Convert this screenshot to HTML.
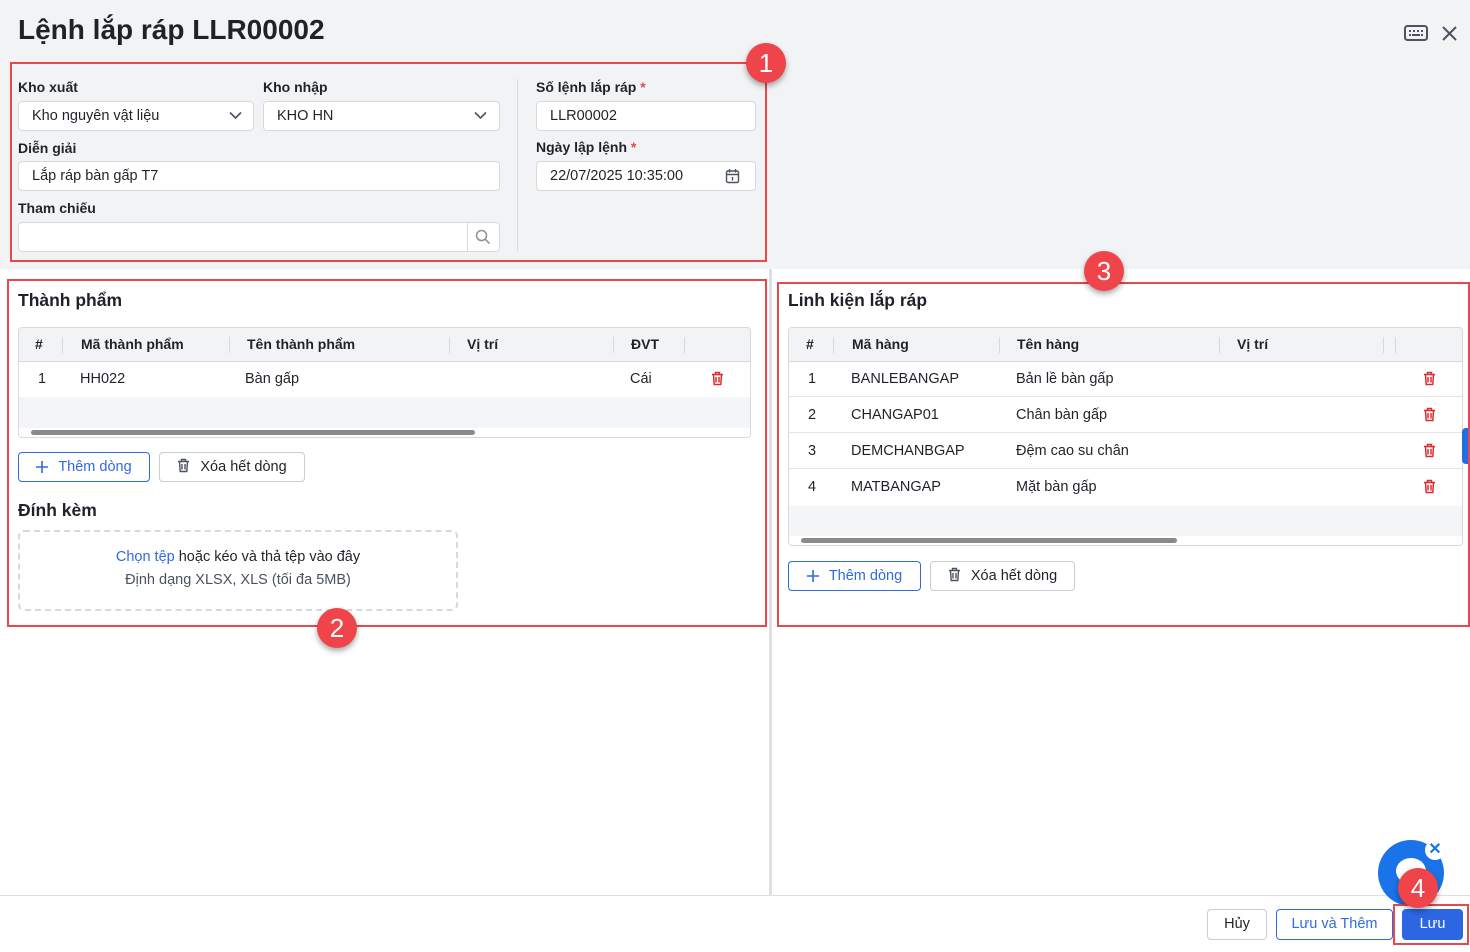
<!DOCTYPE html>
<html><head><meta charset="utf-8"><style>
*{box-sizing:border-box;margin:0;padding:0}
body{width:1470px;height:952px;position:relative;overflow:hidden;background:#fff;font-family:"Liberation Sans","Noto Sans CJK SC",sans-serif;color:#1f2329;font-size:14px}
.a{position:absolute}
.lbl{position:absolute;font-size:14px;font-weight:bold;color:#1f2329}
.req{color:#e8474c}
.inp{position:absolute;height:30px;background:#fff;border:1px solid #d6d9de;border-radius:4px;padding-left:13px;line-height:28px;font-size:14.5px;color:#1f2329}
.red{position:absolute;border:2px solid #e8474c}
.badge{position:absolute;width:40px;height:40px;border-radius:50%;background:#ef4449;color:#fff;font-size:26px;text-align:center;line-height:40px;box-shadow:0 3px 6px rgba(0,0,0,.35)}
.tbl{position:absolute;border:1px solid #d6d9de;border-radius:4px;overflow:hidden;background:#fff}
.th{position:absolute;top:0;height:33px;line-height:33px;font-weight:bold;font-size:14px;background:#f2f3f5}
.row{position:absolute;left:0;right:0;height:36px;border-bottom:1px solid #e3e5e8}
.c{position:absolute;line-height:36px;font-size:14.5px}
.btn{position:absolute;height:30px;border:1px solid #c9cdd4;border-radius:4px;background:#fff;font-size:14.5px;line-height:28px;text-align:center}
.btnb{border-color:#2f6ae1;color:#2f6ae1}
.vd{position:absolute;top:9px;width:1px;height:16px;background:#d6d9de}
.bi{display:inline-block;vertical-align:-2px;margin-right:10px}
</style></head><body>
<div class="a" style="left:0;top:0;width:1470px;height:269px;background:#f2f3f5"></div>
<div class="a" style="left:18px;top:14px;font-size:28px;font-weight:bold;color:#1f2329">Lệnh lắp ráp LLR00002</div>
<svg class="a" style="left:1404px;top:25px" width="24" height="16" viewBox="0 0 24 16"><rect x="1" y="1" width="22" height="14" rx="2.5" fill="none" stroke="#4b5260" stroke-width="2"/><g fill="#4b5260"><rect x="5" y="5" width="2" height="2"/><rect x="9" y="5" width="2" height="2"/><rect x="13" y="5" width="2" height="2"/><rect x="17" y="5" width="2" height="2"/><rect x="5" y="9" width="2" height="2"/><rect x="8" y="9" width="8" height="2"/><rect x="17" y="9" width="2" height="2"/></g></svg>
<svg class="a" style="left:1441px;top:25px" width="17" height="17" viewBox="0 0 17 17"><path d="M2 2L15 15M15 2L2 15" stroke="#4b5260" stroke-width="2"/></svg>

<div class="lbl" style="left:18px;top:79px">Kho xuất</div>
<div class="lbl" style="left:263px;top:79px">Kho nhập</div>
<div class="inp" style="left:18px;top:101px;width:236px">Kho nguyên vật liệu</div>
<svg class="a" style="left:229px;top:111px" width="13" height="9"><path d="M1 1.5L6.5 7L12 1.5" fill="none" stroke="#4b5260" stroke-width="1.6"/></svg>
<div class="inp" style="left:263px;top:101px;width:237px">KHO HN</div>
<svg class="a" style="left:474px;top:111px" width="13" height="9"><path d="M1 1.5L6.5 7L12 1.5" fill="none" stroke="#4b5260" stroke-width="1.6"/></svg>
<div class="lbl" style="left:18px;top:140px">Diễn giải</div>
<div class="inp" style="left:18px;top:161px;width:482px">Lắp ráp bàn gấp T7</div>
<div class="lbl" style="left:18px;top:200px">Tham chiếu</div>
<div class="inp" style="left:18px;top:222px;width:482px"></div>
<div class="a" style="left:467px;top:223px;width:1px;height:28px;background:#d6d9de"></div>
<svg class="a" style="left:475px;top:229px" width="16" height="16"><circle cx="6.5" cy="6.5" r="5" fill="none" stroke="#8a9099" stroke-width="1.5"/><path d="M10.3 10.3L14.5 14.5" stroke="#8a9099" stroke-width="1.5"/></svg>
<div class="a" style="left:517px;top:79px;width:1px;height:172px;background:#d6d9de"></div>
<div class="lbl" style="left:536px;top:79px">Số lệnh lắp ráp <span class="req">*</span></div>
<div class="inp" style="left:536px;top:101px;width:220px">LLR00002</div>
<div class="lbl" style="left:536px;top:139px">Ngày lập lệnh <span class="req">*</span></div>
<div class="inp" style="left:536px;top:161px;width:220px">22/07/2025 10:35:00</div>
<svg class="a" style="left:725px;top:168px" width="15" height="16"><rect x="1.5" y="3" width="12" height="11.5" rx="1.5" fill="none" stroke="#4b5260" stroke-width="1.4"/><path d="M1.5 6.5H13.5M4.5 1V4.5M10.5 1V4.5M7.5 9V12.5" stroke="#4b5260" stroke-width="1.4"/></svg>

<div class="a" style="left:769px;top:269px;width:3px;height:627px;background:#dcdfe4"></div>

<div class="a" style="left:18px;top:290px;font-size:17.5px;font-weight:bold">Thành phẩm</div>
<div class="tbl" style="left:18px;top:327px;width:733px;height:111px">
 <div class="th" style="left:0;width:733px"></div>
 <div class="th" style="left:16px">#</div><div class="vd" style="left:43px"></div>
 <div class="th" style="left:62px">Mã thành phẩm</div><div class="vd" style="left:210px"></div>
 <div class="th" style="left:228px">Tên thành phẩm</div><div class="vd" style="left:430px"></div>
 <div class="th" style="left:448px">Vị trí</div><div class="vd" style="left:594px"></div>
 <div class="th" style="left:612px">ĐVT</div><div class="vd" style="left:665px"></div>
 <div class="a" style="left:0;top:33px;width:733px;height:1px;background:#d6d9de"></div>
 <div class="row" style="top:33px;border:none"><div class="c" style="left:19px">1</div><div class="c" style="left:61px">HH022</div><div class="c" style="left:226px">Bàn gấp</div><div class="c" style="left:611px">Cái</div>
 <svg class="a" style="left:692px;top:10px" width="13" height="15"><path d="M1 3.5H12M4.5 3.5V1.5H8.5V3.5M2.5 3.5L3.2 13.5H9.8L10.5 3.5M5 6V11.5M8 6V11.5" fill="none" stroke="#e0292f" stroke-width="1.5"/></svg></div>
 <div class="a" style="left:0;top:69px;width:733px;height:31px;background:#f4f5f6"></div>
 <div class="a" style="left:12px;top:102px;width:444px;height:5px;border-radius:3px;background:#8a8a8a"></div>
</div>
<div class="btn btnb" style="left:18px;top:452px;width:132px"><svg class="bi" width="12" height="12"><path d="M6 0V12M0 6H12" stroke="#2f6ae1" stroke-width="1.6"/></svg>Thêm dòng</div>
<div class="btn" style="left:159px;top:452px;width:146px"><svg class="bi" width="13" height="15"><path d="M1 3.5H12M4.5 3.5V1.5H8.5V3.5M2.5 3.5L3.2 13.5H9.8L10.5 3.5M5 6V11.5M8 6V11.5" fill="none" stroke="#4b5260" stroke-width="1.4"/></svg>Xóa hết dòng</div>
<div class="a" style="left:18px;top:500px;font-size:17.5px;font-weight:bold">Đính kèm</div>
<div class="a" style="left:18px;top:530px;width:440px;height:81px;border:2px dashed #d6d9de;border-radius:6px;text-align:center">
 <div style="margin-top:17px;font-size:14.5px"><span style="color:#2f6ae1">Chọn tệp</span> hoặc kéo và thả tệp vào đây</div>
 <div style="margin-top:7px;font-size:14.5px;color:#4b5260">Định dạng XLSX, XLS (tối đa 5MB)</div>
</div>

<div class="a" style="left:788px;top:290px;font-size:17.5px;font-weight:bold">Linh kiện lắp ráp</div>
<div class="tbl" style="left:788px;top:327px;width:675px;height:219px">
 <div class="th" style="left:0;width:675px"></div>
 <div class="th" style="left:17px">#</div><div class="vd" style="left:44px"></div>
 <div class="th" style="left:63px">Mã hàng</div><div class="vd" style="left:210px"></div>
 <div class="th" style="left:228px">Tên hàng</div><div class="vd" style="left:430px"></div>
 <div class="th" style="left:448px">Vị trí</div><div class="vd" style="left:594px"></div><div class="vd" style="left:606px"></div>
 <div class="a" style="left:0;top:33px;width:675px;height:1px;background:#d6d9de"></div>
 <div class="row" style="top:33px"><div class="c" style="left:19px">1</div><div class="c" style="left:62px">BANLEBANGAP</div><div class="c" style="left:227px">Bản lề bàn gấp</div></div>
 <div class="row" style="top:69px"><div class="c" style="left:19px">2</div><div class="c" style="left:62px">CHANGAP01</div><div class="c" style="left:227px">Chân bàn gấp</div></div>
 <div class="row" style="top:105px"><div class="c" style="left:19px">3</div><div class="c" style="left:62px">DEMCHANBGAP</div><div class="c" style="left:227px">Đệm cao su chân</div></div>
 <div class="row" style="top:141px;border:none"><div class="c" style="left:19px">4</div><div class="c" style="left:62px">MATBANGAP</div><div class="c" style="left:227px">Mặt bàn gấp</div></div>
 <svg class="a" style="left:634px;top:43px" width="13" height="15"><path d="M1 3.5H12M4.5 3.5V1.5H8.5V3.5M2.5 3.5L3.2 13.5H9.8L10.5 3.5M5 6V11.5M8 6V11.5" fill="none" stroke="#e0292f" stroke-width="1.5"/></svg>
 <svg class="a" style="left:634px;top:79px" width="13" height="15"><path d="M1 3.5H12M4.5 3.5V1.5H8.5V3.5M2.5 3.5L3.2 13.5H9.8L10.5 3.5M5 6V11.5M8 6V11.5" fill="none" stroke="#e0292f" stroke-width="1.5"/></svg>
 <svg class="a" style="left:634px;top:115px" width="13" height="15"><path d="M1 3.5H12M4.5 3.5V1.5H8.5V3.5M2.5 3.5L3.2 13.5H9.8L10.5 3.5M5 6V11.5M8 6V11.5" fill="none" stroke="#e0292f" stroke-width="1.5"/></svg>
 <svg class="a" style="left:634px;top:151px" width="13" height="15"><path d="M1 3.5H12M4.5 3.5V1.5H8.5V3.5M2.5 3.5L3.2 13.5H9.8L10.5 3.5M5 6V11.5M8 6V11.5" fill="none" stroke="#e0292f" stroke-width="1.5"/></svg>
 <div class="a" style="left:0;top:178px;width:675px;height:30px;background:#f4f5f6"></div>
 <div class="a" style="left:12px;top:210px;width:376px;height:5px;border-radius:3px;background:#8a8a8a"></div>
</div>
<div class="a" style="left:1462px;top:428px;width:8px;height:36px;background:#1f6fe0;border-radius:4px 0 0 4px"></div>
<div class="btn btnb" style="left:788px;top:561px;width:133px"><svg class="bi" width="12" height="12"><path d="M6 0V12M0 6H12" stroke="#2f6ae1" stroke-width="1.6"/></svg>Thêm dòng</div>
<div class="btn" style="left:930px;top:561px;width:145px"><svg class="bi" width="13" height="15"><path d="M1 3.5H12M4.5 3.5V1.5H8.5V3.5M2.5 3.5L3.2 13.5H9.8L10.5 3.5M5 6V11.5M8 6V11.5" fill="none" stroke="#4b5260" stroke-width="1.4"/></svg>Xóa hết dòng</div>

<div class="a" style="left:0;top:895px;width:1470px;height:1px;background:#dcdfe4"></div>
<div class="btn" style="left:1207px;top:909px;width:60px;height:31px">Hủy</div>
<div class="btn btnb" style="left:1276px;top:909px;width:117px;height:31px">Lưu và Thêm</div>
<div class="btn" style="left:1402px;top:909px;width:61px;height:31px;background:#2d66e3;border-color:#2d66e3;color:#fff">Lưu</div>
<div class="a" style="left:1378px;top:840px;width:66px;height:66px;border-radius:50%;background:#1a73e8"></div>
<div class="a" style="left:1396px;top:858px;width:30px;height:26px;border-radius:50%;background:#fff"></div>
<div class="a" style="left:1425px;top:840px;width:20px;height:20px;border-radius:50%;background:#fff;color:#1a73e8;font-size:16px;font-weight:bold;text-align:center;line-height:20px">✕</div>

<div class="red" style="left:10px;top:62px;width:757px;height:200px"></div>
<div class="red" style="left:7px;top:279px;width:760px;height:348px"></div>
<div class="red" style="left:777px;top:282px;width:693px;height:345px"></div>
<div class="red" style="left:1393px;top:904px;width:76px;height:41px"></div>
<div class="badge" style="left:746px;top:43px">1</div>
<div class="badge" style="left:317px;top:608px">2</div>
<div class="badge" style="left:1084px;top:251px">3</div>
<div class="badge" style="left:1398px;top:868px">4</div>
</body></html>
